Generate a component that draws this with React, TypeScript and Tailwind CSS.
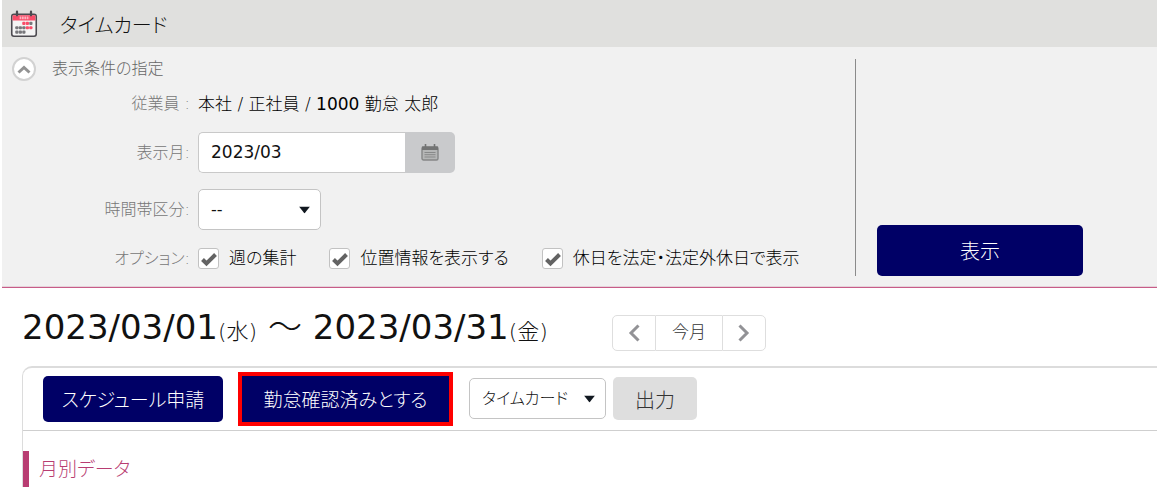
import { useState, type ReactNode } from "react"

const options = [
  { id: "opt-week", label: "週の集計" },
  { id: "opt-location", label: "位置情報を表示する" },
  { id: "opt-holiday", label: "休日を法定・法定外休日で表示" },
]

const cells = [
  [16, 15], [20, 15], [24, 15],
  [8, 20], [12, 20], [16, 20], [20, 20], [24, 20],
  [8, 25], [12, 25], [16, 25],
]
const redCells = ["16,15", "20,15", "20,20", "24,20"]

function CalendarLogo() {
  return (
    <svg width="28" height="28" viewBox="0 0 32 32" aria-hidden="true">
      <rect x="2" y="5" width="28" height="25" rx="2.5" fill="#f4f4f4" stroke="#4c4a50" strokeWidth="1.8" />
      <path d="M3 6h26v6H3z" fill="#f94c69" />
      <path d="M8 2v4M24 2v4" stroke="#4c4a50" strokeWidth="2.6" strokeLinecap="round" />
      <path d="M11 9h11" stroke="#fcb3bf" strokeWidth="3" strokeDasharray="2 .7" />
      {cells.map(([x, y]) => (
        <rect key={`${x},${y}`} x={x - 2} y={y - 1.5} width="3.700" height="3.600" rx="1.2"
          fill={redCells.includes(`${x},${y}`) ? "#f94c69" : "#77777b"} />
      ))}
    </svg>
  )
}

function SmallCalendar() {
  return (
    <svg width="18" height="17" viewBox="0 0 18 17" aria-hidden="true">
      <rect x="1" y="3" width="16" height="13" rx="1.5" fill="#b5b6b6" stroke="#868787" strokeWidth="1.4" />
      <path d="M1 2.500h16V6H1z" fill="#737474" />
      <path d="M4.500 0v3M13.500 0v3" stroke="#737474" strokeWidth="1.6" />
      <path d="M3.500 8.500h11M3.500 10.700h11M3.500 13h11" stroke="#888989" strokeWidth="1" />
    </svg>
  )
}

function Chevron({ d }: { d: string }) {
  return (
    <svg width="12" height="18" viewBox="0 0 12 18" fill="none" stroke="#929296" strokeWidth="3" aria-hidden="true">
      <path d={d} />
    </svg>
  )
}

function Select({ id, label, items, className }: { id: string; label: string; items: string[]; className: string }) {
  return (
    <div className={`relative ${className}`}>
      <select id={id} aria-label={label}
        className="h-full w-full appearance-none rounded-[5px] border border-[#c4c4c4] bg-white pl-3 pr-8 text-base text-[#111]">
        {items.map((item) => <option key={item}>{item}</option>)}
      </select>
      <svg className="pointer-events-none absolute right-[11px] top-1/2 -translate-y-1/2" width="11" height="7" viewBox="0 0 11 7" aria-hidden="true">
        <path d="M0 0h11L5.500 7z" fill="#111820" />
      </svg>
    </div>
  )
}

function Row({ label, htmlFor, children }: { label: string; htmlFor?: string; children: ReactNode }) {
  return (
    <div className="flex items-center gap-2">
      <label htmlFor={htmlFor} className="w-[188px] shrink-0 text-right text-base text-[#777]">{label}</label>
      {children}
    </div>
  )
}

export default function App() {
  const [month, setMonth] = useState("2023/03")
  const [checked, setChecked] = useState<Record<string, boolean>>({
    "opt-week": true, "opt-location": true, "opt-holiday": true,
  })

  return (
    <div className="min-h-screen overflow-x-hidden bg-white pl-0.5 font-['DejaVu_Sans','Noto_Sans_CJK_JP',sans-serif] font-light text-[#111] [font-feature-settings:'palt']">
      <header className="flex h-[47px] items-center gap-[22px] bg-[#e0e0de] pl-2">
        <CalendarLogo />
        <h1 className="pt-1 text-xl">タイムカード</h1>
      </header>

      {/* Filter panel */}
      <form className="flex bg-[#f1f1f1]" onSubmit={(e) => e.preventDefault()}>
        <div className="flex-1 pb-[14px] pt-[10px]">
          <div className="flex h-6 items-center gap-4 pl-[10px]">
            <button type="button" aria-label="閉じる"
              className="flex size-6 items-center justify-center rounded-full border-2 border-[#d2d2d2] bg-white">
              <svg width="14" height="9" viewBox="0 0 14 9" fill="none" stroke="#929292" strokeWidth="3" aria-hidden="true">
                <path d="M1.500 7.500L7 2.500l5.500 5" />
              </svg>
            </button>
            <h2 className="text-base text-[#666]">表示条件の指定</h2>
          </div>

          <div className="flex flex-col gap-4 pt-[11px]">
            <Row label="従業員 :">
              <span className="text-[17px] leading-6 text-black">
                本社 / 正社員 / <span className="font-normal">1000</span> 勤怠 太郎
              </span>
            </Row>
            <Row label="表示月:" htmlFor="month">
              <div className="flex h-[41px]">
                <input id="month" type="text" value={month} onChange={(e) => setMonth(e.target.value)}
                  className="w-[207px] rounded-l-[5px] border border-r-0 border-[#c9c9c9] bg-white px-3 text-[17px] font-normal" />
                <button type="button" aria-label="カレンダー"
                  className="flex w-[50px] items-center justify-center rounded-r-[5px] bg-[#c9cacc]">
                  <SmallCalendar />
                </button>
              </div>
            </Row>
            <Row label="時間帯区分:" htmlFor="zone">
              <Select id="zone" label="時間帯区分" items={["--"]} className="h-[41px] w-[123px] font-normal" />
            </Row>
            <Row label="オプション:">
              <div className="flex items-center gap-[33px]">
                {options.map((o) => (
                  <div key={o.id} className="flex items-center gap-[10px]">
                    <span className="relative flex size-[21px]">
                      <input id={o.id} type="checkbox" checked={checked[o.id]}
                        onChange={(e) => setChecked({ ...checked, [o.id]: e.target.checked })}
                        className="peer size-full appearance-none rounded-[3px] border border-[#c2c2c2] bg-white" />
                      <svg className="pointer-events-none absolute inset-0 hidden peer-checked:block" width="21" height="21" viewBox="0 0 21 21" fill="none" stroke="#636363" strokeWidth="4" aria-hidden="true">
                        <path d="M4.500 11.500l4 4 9-9" />
                      </svg>
                    </span>
                    <label htmlFor={o.id} className="whitespace-nowrap text-[17px] text-black">{o.label}</label>
                  </div>
                ))}
              </div>
            </Row>
          </div>
        </div>

        <div className="flex w-[302px] pb-[10px] pt-3">
          <div className="flex items-end border-l border-[#8b8b8b] pl-[21px]">
            <button type="submit" className="h-[51px] w-[206px] rounded-[5px] bg-[#000066] pt-1 text-xl text-white">表示</button>
          </div>
        </div>
      </form>
      <hr className="h-0.5 border-t border-[#e6d2da] bg-[#c75c88]" />

      <div className="flex items-center gap-16 pl-5 pt-[15px]">
        <h2 className="h-12 whitespace-nowrap text-[34px] leading-[48px] font-normal [font-feature-settings:normal]">
          2023/03/01<span className="text-[22px] leading-none font-light">(水)</span>
          <span className="leading-none font-light"> ～ </span>
          2023/03/31<span className="text-[22px] leading-none font-light">(金)</span>
        </h2>
        <div className="mt-3 flex h-9 text-[17px] text-[#333]">
          <button type="button" aria-label="前月" className="flex w-11 items-center justify-center rounded-l-[5px] border border-[#dedede]">
            <Chevron d="M10.500 1.500L3 9l7.500 7.500" />
          </button>
          <button type="button" className="w-[66px] border-y border-[#dedede]">今月</button>
          <button type="button" aria-label="翌月" className="flex w-11 items-center justify-center rounded-r-[5px] border border-[#dedede]">
            <Chevron d="M1.500 1.500L9 9l-7.500 7.500" />
          </button>
        </div>
      </div>

      <main className="ml-5 mt-[15px] rounded-tl-[10px] border-l border-t-2 border-[#dcdcdc]">
        <div className="flex h-[63px] items-center border-b border-[#cfcfcf] pl-5">
          <button type="button" className="h-[46px] w-[180px] rounded-[5px] bg-[#000066] pt-1 text-[19px] text-white">スケジュール申請</button>
          <button type="button" className="ml-[15px] h-[54px] w-[215px] border-4 border-[#ff0000] bg-[#000066] pt-1 text-[19px] text-white">勤怠確認済みとする</button>
          <Select id="output-type" label="出力形式" items={["タイムカード"]} className="ml-4 h-[41px] w-[137px]" />
          <button type="button" className="ml-[7px] h-[43px] w-[84px] rounded-[5px] bg-[#dedede] pt-1 text-xl text-[#333]">出力</button>
        </div>
        <h3 className="mt-5 h-9 border-l-[6px] border-[#b83d72] pl-[10px] text-[19px] leading-9 text-[#b83d72]">月別データ</h3>
      </main>
    </div>
  )
}
